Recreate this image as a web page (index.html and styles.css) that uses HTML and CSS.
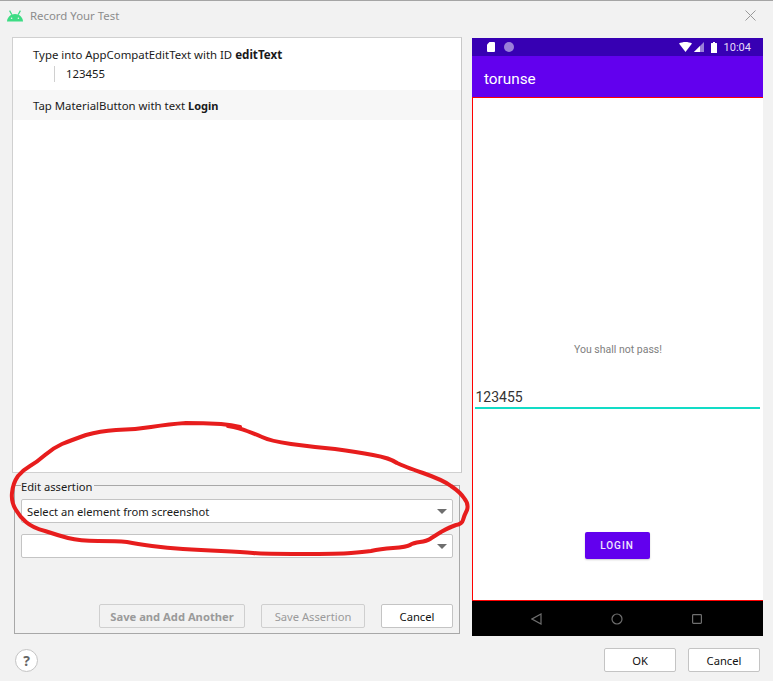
FILE: index.html
```html
<!DOCTYPE html>
<html lang="en">
<head>
  <meta charset="UTF-8" />
  <title>Record Your Test</title>
  <link rel="stylesheet" href="styles.css">
</head>
<body>
  <div class="dialog">
    <div class="titlebar">
      <svg class="android-logo" width="16" height="12" viewBox="0 0 16 12">
        <path d="M0 11.5C0 7.6 3.5 4 8 4s8 3.6 8 7.5z" fill="#3ddc84"/>
        <path d="M2.6 0.6l2.2 4M13.4 0.6l-2.2 4" stroke="#3ddc84" stroke-width="1.2" fill="none"/>
        <circle cx="4.6" cy="8.2" r="0.8" fill="#f2f2f2"/>
        <circle cx="11.4" cy="8.2" r="0.8" fill="#f2f2f2"/>
      </svg>
      <span class="title">Record Your Test</span>
      <svg class="close" width="11" height="11" viewBox="0 0 11 11">
        <path d="M0.5 0.5l10 10M10.5 0.5l-10 10" stroke="#999" stroke-width="1" fill="none"/>
      </svg>
    </div>

    <div class="main">
      <div class="left">
        <div class="steps">
          <div class="step">
            <div>Type into AppCompatEditText with ID <b>editText</b></div>
            <div class="step-value">123455</div>
          </div>
          <div class="step step-alt">
            <div>Tap MaterialButton with text <b class="login-word">Login</b></div>
          </div>
        </div>

        <fieldset class="assertion">
          <legend>Edit assertion</legend>
          <div class="select">
            <span>Select an element from screenshot</span>
            <i class="arrow"></i>
          </div>
          <div class="select">
            <span></span>
            <i class="arrow"></i>
          </div>
          <div class="assertion-actions">
            <button class="btn btn-disabled btn-bold">Save and Add Another</button>
            <button class="btn btn-disabled btn-assert">Save Assertion</button>
            <button class="btn">Cancel</button>
          </div>
        </fieldset>
      </div>

      <div class="phone">
        <div class="statusbar">
          <svg class="sd" width="8" height="10" viewBox="0 0 8 10">
            <path d="M2.5 0H7a1 1 0 0 1 1 1v8a1 1 0 0 1-1 1H1a1 1 0 0 1-1-1V2.500z" fill="#fff"/>
          </svg>
          <span class="dot"></span>
          <span class="status-space"></span>
          <svg width="13" height="10" viewBox="0 0 13 10">
            <path d="M0 1.500C3.600-.5 9.400-.5 13 1.500L6.500 10z" fill="#fff"/>
          </svg>
          <svg class="signal" width="10" height="10" viewBox="0 0 10 10">
            <path d="M10 0v10H0z" fill="#9a80d9"/>
            <path d="M6 4v6H0z" fill="#fff"/>
          </svg>
          <svg class="battery" width="6" height="11" viewBox="0 0 6 11">
            <path d="M2 0h2v1h1.500a.5.5 0 0 1 .5.5V11H0V1.500a.5.5 0 0 1 .5-.5H2z" fill="#fff"/>
          </svg>
          <span class="clock">10:04</span>
        </div>
        <div class="appbar">torunse</div>
        <div class="screen">
          <div class="message">You shall not pass!</div>
          <div class="edit">123455</div>
          <button class="login">LOGIN</button>
        </div>
        <div class="navbar">
          <svg width="11" height="12" viewBox="0 0 11 12">
            <path d="M10 1v10L1 6z" fill="none" stroke="#6f6f6f" stroke-width="1.2"/>
          </svg>
          <svg width="12" height="12" viewBox="0 0 12 12">
            <circle cx="6" cy="6" r="5" fill="none" stroke="#6f6f6f" stroke-width="1.2"/>
          </svg>
          <svg width="10" height="10" viewBox="0 0 10 10">
            <rect x="0.6" y="0.6" width="8.800" height="8.800" rx="0.8" fill="none" stroke="#6f6f6f" stroke-width="1.2"/>
          </svg>
        </div>
      </div>
    </div>

    <div class="footer">
      <div class="help">?</div>
      <div class="footer-actions">
        <button class="btn">OK</button>
        <button class="btn">Cancel</button>
      </div>
    </div>

    <svg class="scribble" width="773" height="681" viewBox="0 0 773 681">
      <path d="M228 426 Q240 428 247 431 Q255 434 262 437 Q270 441 291 444 Q313 447 335 449 Q357 452 373 455 Q390 458 397 463 Q403 466 423 473 Q443 480 451 486 Q460 492 464 498 Q469 504 467 510 Q464 516 463 520 Q462 524 456 525 Q450 527 441 532 Q433 537 430 539 Q427 541 420 542 Q413 543 410 545 Q407 547 393 548 Q380 549 371 551 Q363 552 351 553 Q340 554 301 554 Q263 554 253 553 Q243 552 221 551 Q200 550 183 549 Q167 548 152 546 Q137 544 127 542 Q117 541 98 541 Q80 541 68 538 Q57 535 45 531 Q33 528 26 522 Q20 517 16 510 Q11 502 12 493 Q13 483 18 476 Q23 470 30 466 Q37 462 45 455 Q53 448 62 444 Q72 440 86 435 Q100 431 116 430 Q133 430 151 427 Q170 424 186 423 Q203 423 221 424 Q232 425 240 427" fill="none" stroke="#e71d1d" stroke-width="4" stroke-linejoin="round" stroke-linecap="round"/>
    </svg>
  </div>
</body>
</html>
```

FILE: styles.css
```css
* {
  box-sizing: border-box;
}
html, body {
  margin: 0;
  padding: 0;
}
body {
  font-family: "Noto Sans", "Open Sans", sans-serif;
  font-size: 11.2px;
  color: #1a1a1a;
  background-color: #f2f2f2;
}
.dialog {
  position: relative;
  width: 773px;
  height: 681px;
  border-top: 1px solid #a5a5a5;
  overflow: hidden;
}
.titlebar {
  display: flex;
  align-items: center;
  height: 29px;
  padding: 0 17px 0 7px;
}
.android-logo {
  margin-right: 7px;
}
.title {
  flex: 1;
  font-size: 11.4px;
  color: #8c8c8c;
}
.main {
  display: flex;
  align-items: flex-start;
  padding: 7px 10px 0 12px;
}
.left {
  width: 450px;
  margin-right: 10px;
}
.steps {
  height: 436px;
  font-size: 11.4px;
  background: #fff;
  border: 1px solid #d0d0d0;
  border-right-color: #c8c8c8;
}
.steps b {
  font-size: 11.6px;
}
.steps .login-word {
  font-size: 11px;
}
.step {
  height: 52px;
  padding: 9px 20px 0;
}
.step-alt {
  height: 30px;
  padding-top: 8px;
  background: #f7f7f7;
}
.step-value {
  height: 16px;
  margin: 4px 0 0 21px;
  padding-left: 11px;
  line-height: 16px;
  border-left: 1px solid #d0d0d0;
}
.assertion {
  width: 445px;
  height: 159px;
  margin: 2px 0 0 2px;
  padding: 4px 6px 5px 6px;
  border: 1px solid #a8a8a8;
}
.assertion legend {
  padding: 4px 2px 0 0;
  line-height: 16px;
}
.select {
  display: flex;
  align-items: center;
  justify-content: space-between;
  width: 432px;
  height: 24px;
  margin-bottom: 11px;
  padding: 0 5px;
  background: #fff;
  border: 1px solid #c4c4c4;
  border-radius: 2px;
}
.arrow {
  width: 0;
  height: 0;
  border-left: 5px solid transparent;
  border-right: 5px solid transparent;
  border-top: 5px solid #6e6e6e;
}
.assertion-actions {
  display: flex;
  justify-content: flex-end;
  width: 432px;
  margin-top: 46px;
}
.btn {
  width: 72px;
  height: 24px;
  padding: 0;
  font-family: inherit;
  font-size: 11.2px;
  color: #111;
  background: #fff;
  border: 1px solid #c4c4c4;
  border-radius: 2px;
}
.btn-disabled {
  color: #9a9a9a;
  background: #f2f2f2;
  border-color: #cfcfcf;
}
.btn-bold {
  width: 146px;
  margin-right: 16px;
  font-weight: 700;
}
.btn-assert {
  width: 104px;
  margin-right: 16px;
}
.phone {
  display: flex;
  flex-direction: column;
  width: 291px;
  height: 598px;
  margin-top: 1px;
  font-family: Roboto, sans-serif;
}
.statusbar {
  display: flex;
  align-items: center;
  height: 18px;
  padding: 0 12px 0 15px;
  color: #e6dcf8;
  background: #3700b3;
}
.dot {
  width: 10px;
  height: 10px;
  margin-left: 9px;
  background: #9a80d9;
  border-radius: 50%;
}
.status-space {
  flex: 1;
}
.signal {
  margin-left: 2px;
}
.battery {
  margin-left: 7px;
}
.clock {
  margin-left: 7px;
  font-size: 11px;
}
.appbar {
  height: 41px;
  padding: 14px 12px 0;
  font-size: 15.3px;
  line-height: 18px;
  color: #fff;
  background: #6200ee;
}
.screen {
  display: flex;
  flex-direction: column;
  align-items: center;
  height: 504px;
  background: #fff;
  border-top: 1px solid #f00;
  border-bottom: 1px solid #f00;
  border-left: 1px solid #f00;
}
.message {
  margin-top: 245px;
  font-size: 10.5px;
  line-height: 14px;
  color: #808080;
}
.edit {
  width: 285px;
  height: 22px;
  margin: 30px 0 0 -2px;
  padding: 2px 0 0 1px;
  font-size: 14px;
  line-height: 17px;
  color: #333;
  border-bottom: 2px solid #12dcc6;
}
.login {
  width: 65px;
  height: 27px;
  margin: 123px 0 0 -2px;
  padding: 0;
  font-family: inherit;
  font-size: 10px;
  font-weight: 500;
  letter-spacing: 1px;
  color: #f0e8fc;
  background: #6200ee;
  border: none;
  border-radius: 2px;
  box-shadow: 0 1px 2px rgba(0,0,0,0.2);
}
.navbar {
  display: flex;
  align-items: center;
  justify-content: space-around;
  flex: 1;
  padding: 0 26px 0 24px;
  background: #000;
}
.footer {
  display: flex;
  align-items: center;
  justify-content: space-between;
  padding: 12px 13px 0 15px;
}
.help {
  width: 23px;
  height: 23px;
  font-size: 14px;
  font-weight: 700;
  line-height: 21px;
  text-align: center;
  color: #666;
  background: #fff;
  border: 1px solid #c4c4c4;
  border-radius: 50%;
}
.footer-actions {
  display: flex;
  gap: 12px;
}
.scribble {
  position: absolute;
  top: -1px;
  left: 0;
  pointer-events: none;
}
```
